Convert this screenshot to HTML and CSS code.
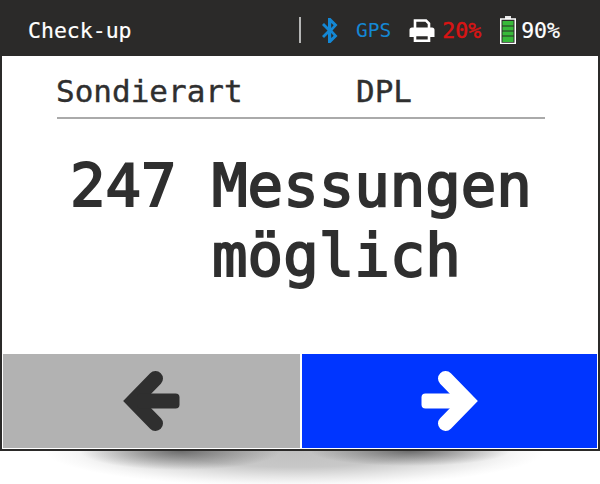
FILE: index.html
```html
<!DOCTYPE html>
<html lang="de">
<head>
    <meta charset="UTF-8">
    <meta name="viewport" content="width=device-width, initial-scale=1.0">
    <title>Check-up</title>
    <link rel="stylesheet" href="styles.css">
</head>
<body>
    <div class="device">
        <header class="status-bar">
            <span class="title">Check-up</span>
            <div class="status-items">
                <span class="divider"></span>
                <svg class="icon-bt" width="16" height="25" viewBox="0 0 16 25">
                    <path d="M6 0 H8.5 L15.5 7 L10.5 12.5 L15.5 18 L8.5 25 H6 V16 L2 20 L0 18 L5.5 12.5 L0 7 L2 5 L6 9 Z M9.2 5 V10 L11.6 7.2 Z M9.2 15 V20 L11.6 17.8 Z" fill="#1487d4" fill-rule="evenodd"/>
                </svg>
                <span class="gps">GPS</span>
                <svg class="icon-printer" width="26" height="23" viewBox="0 0 26 23">
                    <path d="M6 10 V1.5 H17 L20 4.5 V10" fill="none" stroke="#fff" stroke-width="2.6"/>
                    <path d="M3 8.5 H23 Q25.5 8.5 25.5 11 V18 H21 V15 H5 V18 H0.5 V11 Q0.5 8.5 3 8.5 Z" fill="#fff"/>
                    <path d="M6 16 H20 V21.7 H6 Z" fill="none" stroke="#fff" stroke-width="2.6"/>
                </svg>
                <span class="pct-low">20%</span>
                <svg class="icon-battery" width="16" height="28" viewBox="0 0 16 28">
                    <rect x="5" y="0" width="6" height="3" fill="#e8e8e8"/>
                    <rect x="0.75" y="3" width="14.5" height="24.5" fill="#2b2a29" stroke="#fff" stroke-width="1.5"/>
                    <rect x="2.5" y="5" width="11" height="4.5" fill="#37b93a"/>
                    <rect x="2.5" y="10.5" width="11" height="4" fill="#37b93a"/>
                    <rect x="2.5" y="15.5" width="11" height="4" fill="#37b93a"/>
                    <rect x="2.5" y="20.5" width="11" height="5.5" fill="#37b93a"/>
                </svg>
                <span class="pct">90%</span>
            </div>
        </header>
        <main class="content">
            <div class="setting-row">
                <span class="setting-name">Sondierart</span>
                <span class="setting-value">DPL</span>
            </div>
            <p class="message">247 Messungen
    möglich</p>
        </main>
        <div class="buttons">
            <button class="nav-btn back-btn">
                <svg width="58" height="60" viewBox="0 0 58 60">
                    <path d="M32.5 7.5 L10.6 30 L32.5 52.5" fill="none" stroke="#2f2f2f" stroke-width="15" stroke-linecap="round"/>
                    <rect x="14" y="22.5" width="42.5" height="15" rx="4" fill="#2f2f2f"/>
                </svg>
            </button>
            <button class="nav-btn next-btn">
                <svg width="58" height="60" viewBox="0 0 58 60">
                    <path d="M24.5 7.5 L46.4 30 L24.5 52.5" fill="none" stroke="#fff" stroke-width="15" stroke-linecap="round"/>
                    <rect x="0.5" y="22.5" width="42.5" height="15" rx="4" fill="#fff"/>
                </svg>
            </button>
        </div>
    </div>
    <div class="shadow"></div>
</body>
</html>
```

FILE: styles.css
```css
body {
    margin: 0;
    background-color: #fff;
    font-family: "DejaVu Sans Mono", "Liberation Mono", monospace;
    color: #2f2f2f;
    overflow: hidden;
}
.device {
    display: flex;
    flex-direction: column;
    height: 451px;
    box-sizing: border-box;
    border-bottom: 2px solid #2b2a29;
    border-left: 2px solid #2b2a29;
    border-right: 2px solid #2b2a29;
}
.status-bar {
    display: flex;
    justify-content: space-between;
    align-items: center;
    height: 56px;
    margin: 0 -2px;
    padding: 6px 40px 2px 28px;
    box-sizing: border-box;
    background-color: #2b2a29;
    color: #fff;
}
.title {
    font-size: 21.5px;
    -webkit-text-stroke: 0.2px #fff;
}
.status-items {
    display: flex;
    align-items: center;
    font-size: 21.5px;
}
.divider {
    width: 2px;
    height: 26px;
    margin-right: 21px;
    background-color: #b5b5b5;
}
.gps {
    margin-left: 18px;
    margin-right: 18px;
    color: #1487d4;
    font-size: 19.5px;
}
.pct-low {
    margin-left: 7px;
    margin-right: 19px;
    color: #d81414;
    -webkit-text-stroke: 0.5px #d81414;
}
.pct {
    margin-left: 5px;
    -webkit-text-stroke: 0.2px #fff;
}
.content {
    flex: 1;
    background-color: #fff;
}
.setting-row {
    display: flex;
    height: 63px;
    margin: 0 53px 0 55px;
    box-sizing: border-box;
    padding-top: 15px;
    border-bottom: 2px solid #aaa;
    font-size: 31px;
    line-height: 40px;
    -webkit-text-stroke: 0.4px #2f2f2f;
}
.setting-name {
    width: 300px;
    margin-left: -1px;
}
.message {
    margin: 32px 0 0 68px;
    font-size: 59px;
    line-height: 70px;
    white-space: pre;
    -webkit-text-stroke: 2px #2f2f2f;
}
.buttons {
    display: flex;
    gap: 2px;
    height: 95px;
    padding: 0 1px 1px;
    box-sizing: border-box;
    background-color: #fff;
}
.nav-btn {
    display: flex;
    justify-content: center;
    align-items: center;
    padding: 0;
    border: none;
    cursor: pointer;
}
.back-btn {
    width: 297px;
    background-color: #b2b2b2;
}
.next-btn {
    width: 295px;
    background-color: #0035ff;
}
.shadow {
    height: 33px;
    background:
        radial-gradient(ellipse 100px 19px at 180px 0, rgba(70, 70, 70, 0.7) 0%, rgba(70, 70, 70, 0.3) 55%, rgba(70, 70, 70, 0) 100%),
        radial-gradient(ellipse 100px 15px at 410px 0, rgba(70, 70, 70, 0.7) 0%, rgba(70, 70, 70, 0.3) 55%, rgba(70, 70, 70, 0) 100%),
        radial-gradient(ellipse 250px 36px at 295px 0, #c0c0c0 0%, #c8c8c8 45%, #e6e6e6 72%, #f8f8f8 90%, #fff 100%);
}
```
